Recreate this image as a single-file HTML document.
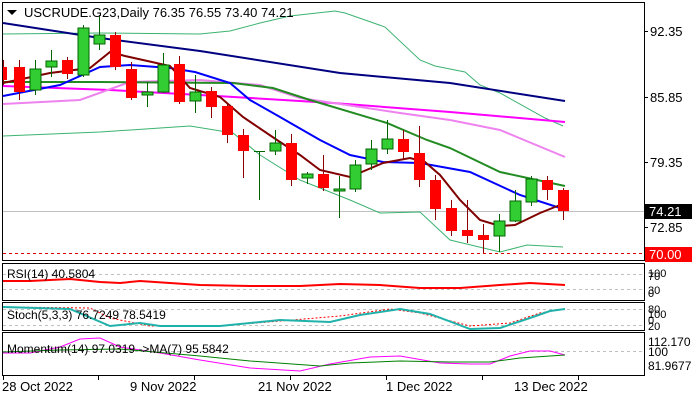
<!DOCTYPE html>
<html><head><style>
body{margin:0;background:#fff;}
svg{display:block;font-family:"Liberation Sans",sans-serif;}
</style></head><body>
<svg width="700" height="400" viewBox="0 0 700 400" xmlns="http://www.w3.org/2000/svg">
<rect width="700" height="400" fill="#fff"/>
<g fill="none" stroke="#000" stroke-width="1">
<rect x="2.5" y="2.5" width="642" height="258"/>
<rect x="2.5" y="263.5" width="642" height="37"/>
<rect x="2.5" y="302.5" width="642" height="28"/>
<rect x="2.5" y="332.5" width="642" height="43"/>
</g>
<g stroke="#000">
<line x1="644" y1="31.5" x2="648" y2="31.5"/><line x1="644" y1="97.5" x2="648" y2="97.5"/>
<line x1="644" y1="162.5" x2="648" y2="162.5"/><line x1="644" y1="227.5" x2="648" y2="227.5"/>
<line x1="3.5" y1="376" x2="3.5" y2="380"/><line x1="98.5" y1="376" x2="98.5" y2="380"/>
<line x1="194.5" y1="376" x2="194.5" y2="380"/><line x1="290.5" y1="376" x2="290.5" y2="380"/>
<line x1="386.5" y1="376" x2="386.5" y2="380"/><line x1="482.5" y1="376" x2="482.5" y2="380"/>
<line x1="578.5" y1="376" x2="578.5" y2="380"/>
</g>
<g font-size="13" fill="#000">
<text x="650" y="36">92.35</text><text x="650" y="102">85.85</text>
<text x="650" y="167">79.35</text><text x="650" y="232">72.85</text>
</g>
<line x1="3" y1="211.5" x2="644" y2="211.5" stroke="#c0c0c0"/>
<line x1="3" y1="253.5" x2="644" y2="253.5" stroke="#e00000" stroke-dasharray="3,3"/>
<rect x="645" y="204" width="47" height="15" fill="#000"/><text x="649" y="216" font-size="13" fill="#fff">74.21</text>
<rect x="645" y="247" width="47" height="15" fill="#f00"/><text x="649" y="259" font-size="13" fill="#fff">70.00</text>
<g fill="none">
<polyline stroke="#3cb371" stroke-width="1" points="3,34 100,33 200,34 230,31 260,23 290,16 335,11 345,13 385,27 420,60 435,66 465,72 480,85 500,93 545,118 563,126"/>
<polyline stroke="#3cb371" stroke-width="1" points="3,136 100,132 190,126 233,133 260,155 300,180 350,200 380,213 420,212 450,240 500,252 527,245 563,247"/>
<polyline stroke="#000080" stroke-width="2" points="3,23 100,38 200,51 340,73 450,83 565,101"/>
<polyline stroke="#ff00ff" stroke-width="2" points="3,86 110,90 200,95 333,103 450,112 565,122"/>
<polyline stroke="#ee82ee" stroke-width="2" points="3,104 80,100 130,82 200,80 260,85 300,98 400,113 450,120 500,130 565,157"/>
<polyline stroke="#228b22" stroke-width="2" points="3,82 100,82 233,83 273,88 310,100 387,123 427,140 450,148 500,172 565,186"/>
<polyline stroke="#0000ff" stroke-width="2" points="3,96 60,85 100,67 130,65 170,68 195,72 230,83 250,100 280,117 320,140 350,155 383,162 420,163 470,172 520,195 560,208"/>
<polyline stroke="#800000" stroke-width="2" points="3,83 50,73 90,68 110,52 125,56 170,66 190,88 220,97 243,117 277,140 300,155 320,170 350,177 383,163 410,158 425,162 440,175 460,200 480,220 500,226 515,225 540,213 565,203"/>
</g>
<g>
<line x1="3.5" y1="60" x2="3.5" y2="85" stroke="#8b0000"/><rect x="3" y="67" width="4" height="13" fill="#f00"/>
<line x1="19.5" y1="60" x2="19.5" y2="100" stroke="#8b0000"/><rect x="14" y="67" width="11" height="25" fill="#f00"/>
<line x1="35.5" y1="60" x2="35.5" y2="95" stroke="#006400"/><rect x="30" y="69" width="11" height="21" fill="#32cd32" stroke="#006400"/>
<line x1="51.5" y1="50" x2="51.5" y2="77" stroke="#006400"/><rect x="46" y="61" width="11" height="6" fill="#32cd32" stroke="#006400"/>
<line x1="67.5" y1="57" x2="67.5" y2="79" stroke="#8b0000"/><rect x="62" y="60" width="11" height="14" fill="#f00"/>
<line x1="83.5" y1="25" x2="83.5" y2="77" stroke="#006400"/><rect x="78" y="28" width="11" height="47" fill="#32cd32" stroke="#006400"/>
<line x1="99.5" y1="15" x2="99.5" y2="50" stroke="#006400"/><rect x="94" y="35" width="11" height="9" fill="#32cd32" stroke="#006400"/>
<line x1="115.5" y1="32" x2="115.5" y2="70" stroke="#8b0000"/><rect x="110" y="35" width="11" height="32" fill="#f00"/>
<line x1="131.5" y1="62" x2="131.5" y2="100" stroke="#8b0000"/><rect x="126" y="69" width="11" height="29" fill="#f00"/>
<line x1="147.5" y1="82" x2="147.5" y2="107" stroke="#006400"/><rect x="142" y="92" width="11" height="3" fill="#32cd32" stroke="#006400"/>
<line x1="163.5" y1="53" x2="163.5" y2="93" stroke="#006400"/><rect x="158" y="65" width="11" height="27" fill="#32cd32" stroke="#006400"/>
<line x1="179.5" y1="56" x2="179.5" y2="104" stroke="#8b0000"/><rect x="174" y="64" width="11" height="38" fill="#f00"/>
<line x1="195.5" y1="75" x2="195.5" y2="113" stroke="#006400"/><rect x="190" y="92" width="11" height="9" fill="#32cd32" stroke="#006400"/>
<line x1="211.5" y1="87" x2="211.5" y2="118" stroke="#8b0000"/><rect x="206" y="91" width="11" height="16" fill="#f00"/>
<line x1="227.5" y1="103" x2="227.5" y2="143" stroke="#8b0000"/><rect x="222" y="106" width="11" height="29" fill="#f00"/>
<line x1="243.5" y1="129" x2="243.5" y2="178" stroke="#8b0000"/><rect x="238" y="135" width="11" height="16" fill="#f00"/>
<line x1="259.5" y1="151" x2="259.5" y2="200" stroke="#006400"/><rect x="254" y="151" width="11" height="1" fill="#006400"/>
<line x1="275.5" y1="130" x2="275.5" y2="155" stroke="#006400"/><rect x="270" y="143" width="11" height="8" fill="#32cd32" stroke="#006400"/>
<line x1="291.5" y1="134" x2="291.5" y2="186" stroke="#8b0000"/><rect x="286" y="143" width="11" height="37" fill="#f00"/>
<line x1="307.5" y1="172" x2="307.5" y2="184" stroke="#006400"/><rect x="302" y="174" width="11" height="4" fill="#32cd32" stroke="#006400"/>
<line x1="323.5" y1="155" x2="323.5" y2="191" stroke="#8b0000"/><rect x="318" y="174" width="11" height="14" fill="#f00"/>
<line x1="339.5" y1="176" x2="339.5" y2="218" stroke="#006400"/><rect x="334" y="189" width="11" height="2" fill="#32cd32" stroke="#006400"/>
<line x1="355.5" y1="160" x2="355.5" y2="192" stroke="#006400"/><rect x="350" y="165" width="11" height="24" fill="#32cd32" stroke="#006400"/>
<line x1="371.5" y1="140" x2="371.5" y2="170" stroke="#006400"/><rect x="366" y="149" width="11" height="15" fill="#32cd32" stroke="#006400"/>
<line x1="387.5" y1="120" x2="387.5" y2="154" stroke="#006400"/><rect x="382" y="139" width="11" height="10" fill="#32cd32" stroke="#006400"/>
<line x1="403.5" y1="130" x2="403.5" y2="160" stroke="#8b0000"/><rect x="398" y="139" width="11" height="13" fill="#f00"/>
<line x1="419.5" y1="126" x2="419.5" y2="187" stroke="#8b0000"/><rect x="414" y="153" width="11" height="27" fill="#f00"/>
<line x1="435.5" y1="175" x2="435.5" y2="220" stroke="#8b0000"/><rect x="430" y="180" width="11" height="29" fill="#f00"/>
<line x1="451.5" y1="200" x2="451.5" y2="236" stroke="#8b0000"/><rect x="446" y="208" width="11" height="23" fill="#f00"/>
<line x1="467.5" y1="200" x2="467.5" y2="243" stroke="#8b0000"/><rect x="462" y="230" width="11" height="6" fill="#f00"/>
<line x1="483.5" y1="224" x2="483.5" y2="253" stroke="#8b0000"/><rect x="478" y="235" width="11" height="5" fill="#f00"/>
<line x1="499.5" y1="214" x2="499.5" y2="252" stroke="#006400"/><rect x="494" y="221" width="11" height="15" fill="#32cd32" stroke="#006400"/>
<line x1="515.5" y1="190" x2="515.5" y2="222" stroke="#006400"/><rect x="510" y="201" width="11" height="20" fill="#32cd32" stroke="#006400"/>
<line x1="531.5" y1="176" x2="531.5" y2="206" stroke="#006400"/><rect x="526" y="179" width="11" height="23" fill="#32cd32" stroke="#006400"/>
<line x1="547.5" y1="176" x2="547.5" y2="200" stroke="#8b0000"/><rect x="542" y="180" width="11" height="10" fill="#f00"/>
<line x1="563.5" y1="188" x2="563.5" y2="220" stroke="#8b0000"/><rect x="558" y="190" width="11" height="21" fill="#f00"/>
</g>
<polygon points="7,10 17,10 12,15" fill="#000"/>
<text x="24" y="17" font-size="13" fill="#000">USCRUDE.G23,Daily  76.35 76.55 73.40 74.21</text>
<line x1="3" y1="274.5" x2="644" y2="274.5" stroke="#c0c0c0" stroke-dasharray="3,3"/>
<line x1="3" y1="289.5" x2="644" y2="289.5" stroke="#c0c0c0" stroke-dasharray="3,3"/>
<polyline fill="none" stroke="#f00" stroke-width="2" points="3,281 30,281 70,279 100,282 120,283 140,281 170,283 200,285 250,286 300,286 340,284 380,285 420,288 460,288 500,285 530,283 565,285"/>
<text x="7" y="278" font-size="12">RSI(14) 40.5804</text>
<text x="648" y="277" font-size="11">100</text><text x="648" y="280" font-size="11">70</text>
<text x="648" y="294" font-size="11">30</text><text x="648" y="297" font-size="11">0</text>
<line x1="3" y1="309.5" x2="644" y2="309.5" stroke="#c0c0c0" stroke-dasharray="3,3"/>
<line x1="3" y1="325.5" x2="644" y2="325.5" stroke="#c0c0c0" stroke-dasharray="3,3"/>
<polyline fill="none" stroke="#f00" stroke-dasharray="2,2" points="3,307 90,308 110,318 150,326 220,326 280,321 340,316 390,309 420,313 470,326 510,323 540,313 565,309"/>
<polyline fill="none" stroke="#20b2aa" stroke-width="2" points="3,307 70,309 110,326 140,323 160,326 220,326 280,320 330,322 360,315 400,309 430,314 470,329 500,328 530,318 550,311 565,309"/>
<text x="7" y="319" font-size="12">Stoch(5,3,3) 76.7249 78.5419</text>
<text x="648" y="313" font-size="11">80</text><text x="648" y="318" font-size="11">100</text>
<text x="648" y="324" font-size="11">0</text><text x="648" y="330" font-size="11">20</text>
<line x1="3" y1="351.5" x2="644" y2="351.5" stroke="#c0c0c0" stroke-dasharray="3,3"/>
<polyline fill="none" stroke="#ff00ff" points="3,353 30,353 60,347 80,339 100,338 120,347 160,353 200,360 250,368 300,371 330,364 370,357 400,356 440,363 470,364 490,364 510,356 530,351 550,351 565,355"/>
<polyline fill="none" stroke="#008000" points="3,352 60,350 120,349 200,356 250,361 320,366 350,363 400,361 450,362 490,362 520,358 565,355"/>
<text x="7" y="353" font-size="12">Momentum(14) 97.0319    -&gt;MA(7) 95.5842</text>
<text x="648" y="346" font-size="12">112.170</text><text x="648" y="356" font-size="12">100</text>
<text x="648" y="370" font-size="12">81.9677</text>
<g font-size="13">
<text x="2" y="391">28 Oct 2022</text><text x="130" y="391">9 Nov 2022</text>
<text x="258" y="391">21 Nov 2022</text><text x="386" y="391">1 Dec 2022</text>
<text x="514" y="391">13 Dec 2022</text>
</g>
</svg>
</body></html>
